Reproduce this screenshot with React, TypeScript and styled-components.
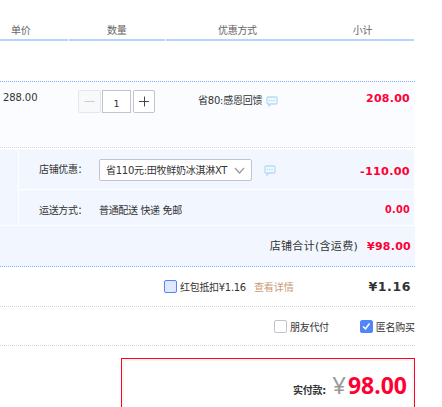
import React from 'react';
import styled, { createGlobalStyle } from 'styled-components';

const latin = '"DejaVu Sans", "Noto Sans CJK SC", sans-serif';

const Global = createGlobalStyle`
  * { box-sizing: border-box; }
  body { margin: 0; background: #fff; overflow: hidden; }
`;

const Page = styled.main`
  width: 415px;
  height: 407px;
  overflow: hidden;
  color: #333;
  font: 10px/16px ${latin};
  white-space: nowrap;
`;

const Header = styled.header`
  display: grid;
  grid-template-columns: 68px 96px 248px;
  column-gap: 1px;
  height: 81px;
  align-items: start;
`;

const HeadCell = styled.div<{ $start: number }>`
  height: 41px;
  padding: 23px 0 0 ${p => p.$start}px;
  border-bottom: 2px solid #b3d4ff;
  color: #666;
  letter-spacing: -0.3px;
`;

const SubtotalHead = styled.span`
  margin-left: 96px;
`;

const ItemRow = styled.section`
  display: grid;
  grid-template-columns: 78px 119px 1fr auto;
  height: 67px;
  padding: 8px 5px 0 0;
  background: #fbfcff;
  border-top: 1px dotted #80b2ff;
  border-bottom: 1px dotted #d5d5d5;
`;

const UnitPrice = styled.span`
  padding-left: 3px;
  letter-spacing: -0.1px;
`;

const Stepper = styled.div`
  display: flex;
  gap: 1px;
  height: 23px;
`;

const StepButton = styled.button<{ $off?: boolean }>`
  display: grid;
  place-items: center;
  width: ${p => (p.$off ? 23 : 22)}px;
  height: 23px;
  padding: 0;
  border: 1px solid ${p => (p.$off ? '#e5e6ea' : '#c1c3ce')};
  border-radius: 2px;
  background: ${p => (p.$off ? '#f8f9fb' : '#fff')};
  color: ${p => (p.$off ? '#ccc' : '#444658')};
`;

const Quantity = styled.span`
  width: 29px;
  height: 23px;
  margin-right: 1px;
  border: 1px solid #c1c3ce;
  background: #fff;
  text-align: center;
  font-size: 9.5px;
  line-height: 25px;
`;

const Promo = styled.div`
  display: flex;
  align-items: flex-start;
  gap: 4px;
  padding: 3px 0 0 1px;
  letter-spacing: -0.22px;
  svg { margin-top: 3px; }
`;

const Amount = styled.strong<{ $size: number; $lift?: number }>`
  padding-bottom: ${p => p.$lift ?? 0}px;
  color: #f03;
  font-size: ${p => p.$size}px;
  letter-spacing: 0.25px;
`;

const ItemAmount = styled(Amount)`
  padding-top: 1px;
`;

const DiscountAmount = styled(Amount)`
  padding-top: 3px;
`;

const Details = styled.section`
  display: grid;
  grid-template-columns: 18px 395px;
  grid-template-rows: 39px 35px;
  gap: 1px;
  padding-top: 2px;
`;

const SideCell = styled.div`
  grid-row: span 2;
  background: #f2f7ff;
`;

const DetailCell = styled.div<{ $shift: number }>`
  display: grid;
  grid-template-columns: 60px 1fr auto;
  align-items: center;
  padding: ${p => p.$shift}px 4px 0 20px;
  background: #f2f7ff;
`;

const Label = styled.span`
  letter-spacing: -0.35px;
`;

const Choice = styled.div`
  display: flex;
  align-items: center;
  gap: 12px;
`;

const Select = styled.div`
  display: flex;
  align-items: center;
  justify-content: space-between;
  width: 153px;
  height: 22px;
  padding: 1px 6px 0;
  border: 1px solid #c1c3ce;
  border-radius: 2px;
  background: #fff;
  letter-spacing: -0.27px;
`;

const StoreTotal = styled.section`
  display: flex;
  align-items: center;
  justify-content: flex-end;
  gap: 9px;
  height: 41px;
  margin-top: 1px;
  padding: 1px 4px 0 0;
  background: #f2f7ff;
  border-bottom: 1px dotted #80b2ff;
`;

const StoreLabel = styled.span`
  font-size: 11px;
  letter-spacing: 0.3px;
`;

const OptionRow = styled.section<{ $height: number }>`
  display: flex;
  align-items: center;
  height: ${p => p.$height}px;
  border-bottom: 1px dotted #d5d5d5;
`;

const Option = styled.label<{ $start: number }>`
  display: flex;
  align-items: center;
  gap: 3px;
  margin-left: ${p => p.$start}px;
  letter-spacing: -0.3px;
`;

const OptionText = styled.span`
  padding-top: 3px;
`;

const Box = styled.span<{ $tone: 'plain' | 'hover' | 'checked' }>`
  display: grid;
  place-items: center;
  width: 13px;
  height: 13px;
  border: 1px solid ${p => (p.$tone === 'plain' ? '#c1c3ce' : '#5285f7')};
  border-radius: 2px;
  background: ${p => ({ plain: '#fff', hover: '#dfe8ff', checked: '#5285f7' })[p.$tone]};
`;

const DetailLink = styled.a`
  margin-left: 8px;
  padding-top: 3px;
  color: #c97;
  letter-spacing: -0.1px;
`;

const Credit = styled.strong`
  margin: 0 4px 0 auto;
  font-family: "DejaVu Sans", sans-serif;
  font-size: 12.5px;
  letter-spacing: 0.6px;
`;

const Payment = styled.section`
  display: flex;
  align-items: flex-start;
  justify-content: flex-end;
  height: 60px;
  margin: 12px 0 0 121px;
  padding: 9px 7px 0 0;
  border: 1px solid #f03;
  box-shadow: inset 0 0 0 2px #fff5ef;
`;

const PayLabel = styled.strong`
  margin: 15px 6px 0 0;
  letter-spacing: -0.2px;
`;

const Currency = styled.span`
  margin-right: 2px;
  color: #999;
  font: 24px/34px "Noto Sans", sans-serif;
`;

const PayAmount = styled.strong`
  color: #f03;
  font: bold 23px/34px "Noto Sans", sans-serif;
`;

const ChatIcon = () => (
  <svg width="12" height="11" viewBox="0 0 12 11" fill="none">
    <path d="M2 1H10Q11 1 11 2V7Q11 8 10 8H5L3 10V8H2Q1 8 1 7V2Q1 1 2 1Z" fill="#eef8ff" stroke="#b7dbf7" strokeWidth="1.3" />
    <path d="M3 4.5H9" stroke="#9fcbed" strokeDasharray="1 1.3" />
  </svg>
);

export default function App() {
  return (
    <>
      <Global />
      <Page>
        <Header>
          <HeadCell $start={11}>单价</HeadCell>
          <HeadCell $start={38}>数量</HeadCell>
          <HeadCell $start={52}>优惠方式<SubtotalHead>小计</SubtotalHead></HeadCell>
        </Header>
        <ItemRow>
          <UnitPrice>288.00</UnitPrice>
          <Stepper>
            <StepButton $off aria-label="减少">
              <svg width="11" height="11" stroke="currentColor"><path d="M0.5 5.5H10.5" /></svg>
            </StepButton>
            <Quantity>1</Quantity>
            <StepButton aria-label="增加">
              <svg width="10" height="11" stroke="currentColor"><path d="M0 5.5H10M5.5 0.5V10.5" /></svg>
            </StepButton>
          </Stepper>
          <Promo>省80:感恩回馈<ChatIcon /></Promo>
          <ItemAmount $size={11}>208.00</ItemAmount>
        </ItemRow>
        <Details>
          <SideCell />
          <DetailCell $shift={1}>
            <Label>店铺优惠：</Label>
            <Choice>
              <Select>
                省110元:田牧鲜奶冰淇淋XT
                <svg width="11" height="8" fill="none" stroke="#999" strokeWidth="1.2"><path d="M1 1L5.5 6L10 1" /></svg>
              </Select>
              <ChatIcon />
            </Choice>
            <DiscountAmount $size={11.3}>-110.00</DiscountAmount>
          </DetailCell>
          <DetailCell $shift={6}>
            <Label>运送方式：</Label>
            <Label>普通配送 快递 免邮</Label>
            <Amount $size={9.7} $lift={2}>0.00</Amount>
          </DetailCell>
        </Details>
        <StoreTotal>
          <StoreLabel>店铺合计(含运费)</StoreLabel>
          <Amount $size={11}>¥98.00</Amount>
        </StoreTotal>
        <OptionRow $height={40}>
          <Option $start={164}><Box $tone="hover" /><OptionText>红包抵扣¥1.16</OptionText></Option>
          <DetailLink>查看详情</DetailLink>
          <Credit>¥1.16</Credit>
        </OptionRow>
        <OptionRow $height={39}>
          <Option $start={274}><Box $tone="plain" /><OptionText>朋友代付</OptionText></Option>
          <Option $start={31}>
            <Box $tone="checked">
              <svg width="9" height="9" fill="none" stroke="#fff" strokeWidth="1.5"><path d="M1 4.5L3.5 6.8L7.5 1.5" /></svg>
            </Box>
            <OptionText>匿名购买</OptionText>
          </Option>
        </OptionRow>
        <Payment>
          <PayLabel>实付款:</PayLabel>
          <Currency>¥</Currency>
          <PayAmount>98.00</PayAmount>
        </Payment>
      </Page>
    </>
  );
}
